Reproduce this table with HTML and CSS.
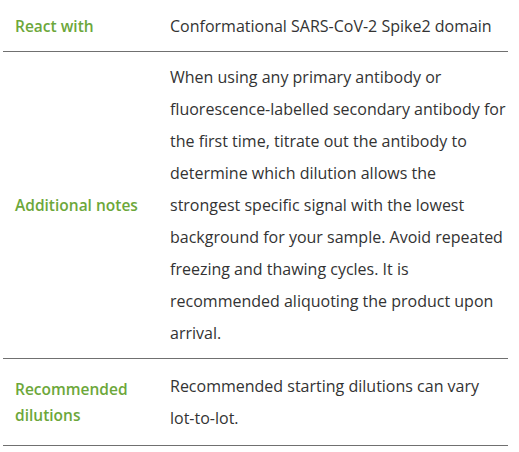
FILE: index.html
```html
<!DOCTYPE html>
<html lang="en">
<head>
<meta charset="utf-8">
<title>Product details</title>
<link rel="stylesheet" href="styles.css">
</head>
<body>
<div class="wrap">
  <table class="specs">
    <tr class="row r1">
      <th class="label">React with</th>
      <td class="value">Conformational SARS-CoV-2 Spike2 domain</td>
    </tr>
    <tr class="row r2">
      <th class="label">Additional notes</th>
      <td class="value">When using any primary antibody or<br>fluorescence-labelled secondary antibody for<br>the first time, titrate out the antibody to<br>determine which dilution allows the<br>strongest specific signal with the lowest<br>background for your sample. Avoid repeated<br>freezing and thawing cycles. It is<br>recommended aliquoting the product upon<br>arrival.</td>
    </tr>
    <tr class="row r3">
      <th class="label">Recommended dilutions</th>
      <td class="value">Recommended starting dilutions can vary<br>lot-to-lot.</td>
    </tr>
  </table>
</div>
</body>
</html>
```

FILE: styles.css
```css
html, body {
  margin: 0;
  padding: 0;
  background: #ffffff;
}
.wrap {
  padding: 0 11px 0 3px;
}
.specs {
  width: 505px;
  border-collapse: collapse;
  font-family: "Open Sans", "Noto Sans", sans-serif;
  font-size: 16px;
  line-height: 32px;
  color: #333333;
}
.row {
  border-bottom: 1px solid #707070;
}
.label {
  width: 155px;
  padding: 9px 0 9px 12px;
  text-align: left;
  vertical-align: middle;
  font-weight: 600;
  font-size: 15.5px;
  color: #6ca73a;
  line-height: 26px;
}
.value {
  padding: 9px 0 9px 0;
  vertical-align: middle;
  font-weight: 400;
  white-space: nowrap;
}
.r1 .value, .r1 .label {
  padding-top: 10px;
}
.r3 .value, .r3 .label {
  padding-top: 11px;
  padding-bottom: 11px;
}
```
